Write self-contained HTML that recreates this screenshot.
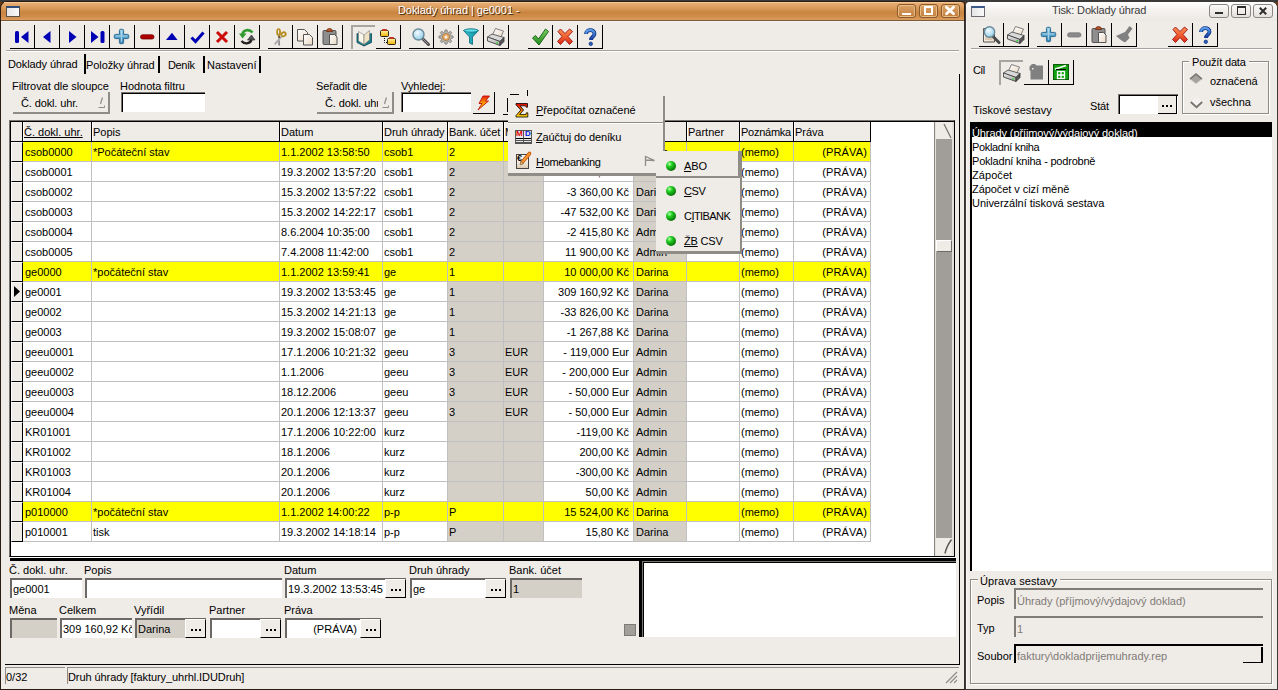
<!DOCTYPE html><html lang="cs"><head><meta charset="utf-8"><title>Doklady úhrad</title><style>
html,body{margin:0;padding:0;}
body{width:1278px;height:690px;overflow:hidden;background:#6a3a10;position:relative;
 font-family:"Liberation Sans",sans-serif;font-size:11px;color:#000;}
div{position:absolute;box-sizing:border-box;}
svg{position:absolute;overflow:visible;}
.t{white-space:nowrap;line-height:13px;height:13px;}
.g{color:#7f7b77;}
.btn{border-right:1px solid #000;border-bottom:1px solid #000;background:#efebe7;}
.sunk{border-top:1px solid #77736f;border-left:1px solid #77736f;background:#fff;box-shadow:inset 1px 1px 0 #000;}
.sunkg{border-top:2px solid #6e6b68;border-left:2px solid #6e6b68;background:#fff;}
u{text-decoration:underline;}
</style></head><body>
<div style="left:0px;top:0px;width:1278px;height:2px;background:#3a3a3a;"></div>
<div style="left:0px;top:689px;width:1278px;height:1px;background:#2a2a2a;"></div>
<div style="left:0px;top:1px;width:965px;height:689px;background:#2b1d12;border-radius:7px 4px 0 0;"></div>
<div style="left:1px;top:2px;width:963px;height:19px;background:linear-gradient(#e9b077 0%,#dea062 25%,#c98540 55%,#cf8c49 75%,#dfa061 100%);border-radius:6px 3px 0 0;"></div>
<div style="left:1px;top:20px;width:963px;height:1px;background:#7a5a3a;"></div>
<div style="left:4px;top:2px;width:957px;height:1px;background:#f5c592;"></div>
<div style="left:1px;top:21px;width:963px;height:668px;background:#efebe7;"></div>
<div style="left:1px;top:21px;width:963px;height:1px;background:#f6f4f2;"></div>
<div style="left:964px;top:21px;width:2px;height:668px;background:#35302c;"></div>
<div style="left:6px;top:6px;width:14px;height:11px;background:linear-gradient(90deg,#e4e4e4,#fafafa);border:1px solid #5c5145;border-top:2px solid #2f4f7a;"></div>
<div class="t" style="left:398px;top:4px;letter-spacing:-0.076px;color:#fff;text-shadow:1px 1px 0 #4a2c10;">Doklady úhrad | ge0001 -</div>
<div style="left:897px;top:4px;width:19px;height:14px;border:1px solid #8c5a2b;border-radius:3px;background:linear-gradient(#dca569,#c27c3b);box-shadow:inset 0 0 0 1px #e9bb85;"></div>
<div style="left:902px;top:13px;width:9px;height:2px;background:#fff;"></div>
<div style="left:919px;top:4px;width:19px;height:14px;border:1px solid #8c5a2b;border-radius:3px;background:linear-gradient(#dca569,#c27c3b);box-shadow:inset 0 0 0 1px #e9bb85;"></div>
<div style="left:924px;top:6px;width:9px;height:9px;border:2px solid #fff;border-bottom-width:2px;height:9px;"></div>
<div style="left:941px;top:4px;width:19px;height:14px;border:1px solid #8c5a2b;border-radius:3px;background:linear-gradient(#dca569,#c27c3b);box-shadow:inset 0 0 0 1px #e9bb85;"></div>
<svg style="left:945px;top:6px" width="10" height="9" viewBox="0 0 10 9"><path d="M1.500 1.200L8.500 7.800M8.500 1.200L1.500 7.800" stroke="#fff" stroke-width="2.800" stroke-linecap="round" fill="none"/></svg>
<svg width="0" height="0" style="left:0;top:0"><defs>
<linearGradient id="gPlus" x1="0" y1="0" x2="0" y2="1"><stop offset="0" stop-color="#9fd0e8"/><stop offset="0.5" stop-color="#5aa4cc"/><stop offset="1" stop-color="#3a82b0"/></linearGradient>
<linearGradient id="gRed" x1="0" y1="0" x2="0" y2="1"><stop offset="0" stop-color="#f89058"/><stop offset="0.5" stop-color="#f06030"/><stop offset="1" stop-color="#d82818"/></linearGradient>
<linearGradient id="gGreen" x1="0" y1="0" x2="0" y2="1"><stop offset="0" stop-color="#7fd060"/><stop offset="1" stop-color="#1f8a1f"/></linearGradient>
<linearGradient id="gPaper" x1="0" y1="0" x2="1" y2="1"><stop offset="0" stop-color="#ffffff"/><stop offset="1" stop-color="#e9d8c4"/></linearGradient>
<linearGradient id="gTeal" x1="0" y1="0" x2="1" y2="0"><stop offset="0" stop-color="#37c6d6"/><stop offset="1" stop-color="#0f8a9c"/></linearGradient>
<linearGradient id="gYel" x1="0" y1="0" x2="0" y2="1"><stop offset="0" stop-color="#fff2a0"/><stop offset="1" stop-color="#f0b000"/></linearGradient>
<radialGradient id="gLens" cx="0.4" cy="0.35" r="0.7"><stop offset="0" stop-color="#f2fbff"/><stop offset="1" stop-color="#8fcbe6"/></radialGradient>
<radialGradient id="gDot" cx="0.35" cy="0.3" r="0.75"><stop offset="0" stop-color="#b8ffb0"/><stop offset="0.35" stop-color="#22d022"/><stop offset="1" stop-color="#056a05"/></radialGradient>
<linearGradient id="gBlueQ" x1="0" y1="0" x2="0" y2="1"><stop offset="0" stop-color="#5aa0e8"/><stop offset="1" stop-color="#1038a0"/></linearGradient>
<linearGradient id="gPrn" x1="0" y1="0" x2="0" y2="1"><stop offset="0" stop-color="#f4f4f4"/><stop offset="1" stop-color="#9c9c9c"/></linearGradient>
</defs></svg>
<div class="btn" style="left:10px;top:25px;width:25px;height:24px;"></div>
<svg style="left:10px;top:25px" width="24" height="23" viewBox="0 0 24 23"><rect x="5" y="6" width="4" height="12" rx="1.5" fill="#0000b4"/><path d="M11 12L18.5 6V18Z" fill="#0000b4"/></svg>
<div class="btn" style="left:35px;top:25px;width:25px;height:24px;"></div>
<svg style="left:35px;top:25px" width="24" height="23" viewBox="0 0 24 23"><path d="M8 12L15.5 6V18Z" fill="#0000b4"/></svg>
<div class="btn" style="left:60px;top:25px;width:25px;height:24px;"></div>
<svg style="left:60px;top:25px" width="24" height="23" viewBox="0 0 24 23"><path d="M16.5 12L9 6V18Z" fill="#0000b4"/></svg>
<div class="btn" style="left:85px;top:25px;width:25px;height:24px;"></div>
<svg style="left:85px;top:25px" width="24" height="23" viewBox="0 0 24 23"><path d="M13.5 12L6 6V18Z" fill="#0000b4"/><rect x="15.5" y="6" width="4" height="12" rx="1.5" fill="#0000b4"/></svg>
<div class="btn" style="left:110px;top:25px;width:25px;height:24px;"></div>
<svg style="left:110px;top:25px" width="24" height="23" viewBox="0 0 24 23"><path d="M9.4 5.5a1.2 1.2 0 0 1 1.2 -1.2h1.8000000000000003a1.2 1.2 0 0 1 1.2 1.2V9.4H17.5a1.2 1.2 0 0 1 1.2 1.2v1.8000000000000003a1.2 1.2 0 0 1 -1.2 1.2H13.6V17.5a1.2 1.2 0 0 1 -1.2 1.2h-1.8000000000000003a1.2 1.2 0 0 1 -1.2 -1.2V13.6H5.5a1.2 1.2 0 0 1 -1.2 -1.2v-1.8000000000000003a1.2 1.2 0 0 1 1.2 -1.2H9.4Z" fill="url(#gPlus)" stroke="#2a6a92" stroke-width="1"/><path d="M11.5 5.8V16.7M5.8 11.0H17.2" stroke="#c4e6f4" stroke-width="1.200" opacity="0.700" fill="none"/></svg>
<div class="btn" style="left:135px;top:25px;width:25px;height:24px;"></div>
<svg style="left:135px;top:25px" width="24" height="23" viewBox="0 0 24 23"><rect x="5.5" y="9.8" width="13.5" height="4.2" rx="2" fill="#b00000" stroke="#700000" stroke-width="0.8"/></svg>
<div class="btn" style="left:160px;top:25px;width:25px;height:24px;"></div>
<svg style="left:160px;top:25px" width="24" height="23" viewBox="0 0 24 23"><path d="M12 7.800L6 15H17.500Z" fill="#0000b4"/></svg>
<div class="btn" style="left:185px;top:25px;width:25px;height:24px;"></div>
<svg style="left:185px;top:25px" width="24" height="23" viewBox="0 0 24 23"><path d="M6.5 12.5L10.5 16.5L18.5 7.5" stroke="#0000b4" stroke-width="3" fill="none" stroke-linejoin="miter"/></svg>
<div class="btn" style="left:210px;top:25px;width:25px;height:24px;"></div>
<svg style="left:210px;top:25px" width="24" height="23" viewBox="0 0 24 23"><path d="M7 7L17 17M17 7L7 17" stroke="#cc0a0a" stroke-width="3" fill="none"/></svg>
<div class="btn" style="left:235px;top:25px;width:25px;height:24px;"></div>
<svg style="left:235px;top:25px" width="24" height="23" viewBox="0 0 24 23"><path d="M17.5 7.5C14 3.5 8 5 7.5 9.5" stroke="#2e9a2e" stroke-width="2.6" fill="none"/><path d="M4 8.5L11.5 8.5L7.5 13.5Z" fill="#2e9a2e"/><path d="M6.5 16C10 20 16 18.5 16.5 14" stroke="#222" stroke-width="2.4" fill="none"/><path d="M12.5 15L20 15L16.5 10Z" fill="#555" stroke="#222" stroke-width="0.6"/></svg>
<div class="btn" style="left:268px;top:25px;width:25px;height:24px;"></div>
<svg style="left:268px;top:25px" width="24" height="23" viewBox="0 0 24 23"><path d="M10.800 9.500L11.200 20.500" stroke="#8c8c8c" stroke-width="1.800"/><path d="M14 11L6.500 19.500" stroke="#c4c4c4" stroke-width="2"/><path d="M13.500 11.500L7 19" stroke="#777" stroke-width="0.600"/><ellipse cx="10.600" cy="7" rx="1.500" ry="3" stroke="#b48a18" stroke-width="1.700" fill="none"/><ellipse cx="15.500" cy="9.300" rx="2.300" ry="1.900" stroke="#b48a18" stroke-width="1.700" fill="none" transform="rotate(-35 15.500 9.300)"/><circle cx="11.300" cy="12" r="0.900" fill="#6a5010"/></svg>
<div class="btn" style="left:293px;top:25px;width:25px;height:24px;"></div>
<svg style="left:293px;top:25px" width="24" height="23" viewBox="0 0 24 23"><path d="M4.5 4.5h7l3 3v8.5h-10z" fill="url(#gPaper)" stroke="#555" stroke-width="1"/><path d="M10.500 9.500h6l3 3v7.500h-9z" fill="url(#gPaper)" stroke="#555" stroke-width="1"/></svg>
<div class="btn" style="left:318px;top:25px;width:25px;height:24px;"></div>
<svg style="left:318px;top:25px" width="24" height="23" viewBox="0 0 24 23"><rect x="5" y="5.500" width="13" height="14" rx="1" fill="#8e8e8e" stroke="#555" stroke-width="1"/><path d="M8.5 6.500a3 3 0 0 1 6 0z" fill="#b5562a" stroke="#6a2a10" stroke-width="0.8"/><path d="M11.500 9.500h5l2.500 2.500v7.500h-7.500z" fill="url(#gPaper)" stroke="#555" stroke-width="1"/></svg>
<div class="btn" style="left:376px;top:25px;width:25px;height:24px;"></div>
<svg style="left:376px;top:25px" width="24" height="23" viewBox="0 0 24 23"><path d="M8.500 11v6.500h3" stroke="#000" stroke-width="1" stroke-dasharray="1 1" fill="none"/><rect x="4.500" y="5.500" width="8" height="6" rx="1" fill="url(#gYel)" stroke="#1a1200" stroke-width="0.9"/><rect x="6" y="4" width="5" height="2" rx="1" fill="#c03020"/><rect x="11.500" y="13.500" width="8" height="6" rx="1" fill="url(#gYel)" stroke="#1a1200" stroke-width="0.9"/><rect x="13" y="12" width="5" height="2" rx="1" fill="#c03020"/></svg>
<div class="btn" style="left:409px;top:25px;width:25px;height:24px;"></div>
<svg style="left:409px;top:25px" width="24" height="23" viewBox="0 0 24 23"><path d="M13.500 13.500L19.500 19.500" stroke="#4a4a4a" stroke-width="3" stroke-linecap="round"/><path d="M13.5 13.500L19 19" stroke="#9a9a9a" stroke-width="1" stroke-linecap="round"/><circle cx="9.500" cy="9.500" r="5.500" fill="url(#gLens)" stroke="#6a8a9a" stroke-width="1.4"/></svg>
<div class="btn" style="left:434px;top:25px;width:25px;height:24px;"></div>
<svg style="left:434px;top:25px" width="24" height="23" viewBox="0 0 24 23"><path d="M19.1 11.1L19.1 12.9L17.0 13.4L16.5 14.6L17.7 16.4L16.4 17.7L14.6 16.5L13.4 17.0L12.9 19.1L11.1 19.1L10.6 17.0L9.4 16.5L7.6 17.7L6.3 16.4L7.5 14.6L7.0 13.4L4.9 12.9L4.9 11.1L7.0 10.6L7.5 9.4L6.3 7.6L7.6 6.3L9.4 7.5L10.6 7.0L11.1 4.9L12.9 4.9L13.4 7.0L14.6 7.5L16.4 6.3L17.7 7.6L16.5 9.4L17.0 10.6Z" fill="#b9b4aa" stroke="#777" stroke-width="0.8"/><circle cx="12" cy="12" r="3.6" fill="#e8a860" stroke="#8a6a40" stroke-width="0.6"/><circle cx="12" cy="12" r="1.500" fill="#f6f0e6"/></svg>
<div class="btn" style="left:459px;top:25px;width:25px;height:24px;"></div>
<svg style="left:459px;top:25px" width="24" height="23" viewBox="0 0 24 23"><path d="M4.500 5.500C8 3.500 16 3.500 19.500 5.500L13.500 12V19.500L10.500 18V12Z" fill="url(#gTeal)" stroke="#0a6a78" stroke-width="0.8"/><ellipse cx="12" cy="5.500" rx="7" ry="1.600" fill="#5fe0ea" stroke="#0a6a78" stroke-width="0.6"/></svg>
<div class="btn" style="left:484px;top:25px;width:25px;height:24px;"></div>
<svg style="left:484px;top:25px" width="24" height="23" viewBox="0 0 24 23"><path d="M8 11L11.500 3.500L19.500 6L16.500 13Z" fill="url(#gPaper)" stroke="#666" stroke-width="0.8"/><path d="M3.500 12L8 9L20 12.500L16 16.500Z" fill="#d9d9d9" stroke="#444" stroke-width="0.8"/><path d="M3.500 12L16 16.500V20.500L3.500 16Z" fill="url(#gPrn)" stroke="#333" stroke-width="0.8"/><path d="M16 16.500L20 12.500V16.500L16 20.500Z" fill="#555" stroke="#333" stroke-width="0.8"/><rect x="12.500" y="17" width="1.500" height="1.500" fill="#20e020"/></svg>
<div class="btn" style="left:528px;top:25px;width:25px;height:24px;"></div>
<svg style="left:528px;top:25px" width="24" height="23" viewBox="0 0 24 23"><path d="M4.500 13L7.500 10.500L10.500 14L17.500 4L20.500 6.500L11 20Z" fill="url(#gGreen)" stroke="#0f5a0f" stroke-width="0.9"/></svg>
<div class="btn" style="left:553px;top:25px;width:25px;height:24px;"></div>
<svg style="left:553px;top:25px" width="24" height="23" viewBox="0 0 24 23"><path d="M5 6.500L7.500 4L12 8.500L16.500 4L19.500 6.500L15 11.500L19.500 16.500L16.500 19.500L12 14.500L7.500 19.500L4.500 16.500L9 11.500Z" fill="url(#gRed)" stroke="#a01010" stroke-width="0.9" stroke-linejoin="round"/></svg>
<div class="btn" style="left:578px;top:25px;width:25px;height:24px;"></div>
<svg style="left:578px;top:25px" width="24" height="23" viewBox="0 0 24 23"><path d="M8 9C8 4 16.500 4 16.500 8.800C16.500 11.500 13 12 13 15" stroke="#0c2c80" stroke-width="3.800" fill="none"/><path d="M8 9C8 4 16.500 4 16.500 8.800C16.500 11.500 13 12 13 15" stroke="url(#gBlueQ)" stroke-width="2.300" fill="none"/><circle cx="12.800" cy="18.800" r="1.700" fill="#2a60c0" stroke="#0c2c80" stroke-width="0.800"/></svg>
<div style="left:351px;top:25px;width:24px;height:24px;border-top:2px solid #a8a4a0;border-left:2px solid #a8a4a0;background:#efebe7;"></div>
<svg style="left:352px;top:26px" width="24" height="23" viewBox="0 0 24 23"><path d="M5 7.500L12 10.500V20L5 16.500Z" fill="#1a7a86" stroke="#0c4a52" stroke-width="0.8"/><path d="M19.500 7.500L12 10.500V20L19.500 16.500Z" fill="#1a7a86" stroke="#0c4a52" stroke-width="0.8"/><path d="M6.500 5.500L12 9V18.500L6.500 15Z" fill="#fbf6ea" stroke="#777" stroke-width="0.6"/><path d="M17.500 4.500L12 9V18.500L17.500 14Z" fill="#efe2c4" stroke="#777" stroke-width="0.6"/></svg>
<div style="left:6px;top:50px;width:953px;height:1px;background:#a5a19d;"></div>
<div style="left:6px;top:51px;width:953px;height:1px;background:#fff;"></div>
<div class="t" style="left:8px;top:58px;letter-spacing:-0.111px;">Doklady úhrad</div>
<div class="t" style="left:86px;top:59px;letter-spacing:-0.086px;">Položky úhrad</div>
<div class="t" style="left:168px;top:59px;letter-spacing:-0.43px;">Deník</div>
<div class="t" style="left:207px;top:59px;letter-spacing:-0.003px;">Nastavení</div>
<div style="left:84px;top:54px;width:2px;height:20px;background:#000;"></div>
<div style="left:158px;top:56px;width:2px;height:17px;background:#000;"></div>
<div style="left:203px;top:56px;width:2px;height:17px;background:#000;"></div>
<div style="left:259px;top:56px;width:2px;height:17px;background:#000;"></div>
<div class="t" style="left:12px;top:80px;letter-spacing:-0.049px;">Filtrovat dle sloupce</div>
<div class="t" style="left:120px;top:80px;letter-spacing:-0.038px;">Hodnota filtru</div>
<div class="t" style="left:316px;top:80px;letter-spacing:-0.136px;">Seřadit dle</div>
<div class="t" style="left:401px;top:80px;letter-spacing:-0.038px;">Vyhledej:</div>
<div style="left:13px;top:92px;width:97px;height:22px;border-right:2px solid #8f8b87;border-bottom:2px solid #8f8b87;background:#efebe7;overflow:hidden;"></div>
<div class="t" style="left:21px;top:97px;letter-spacing:-0.131px;">Č. dokl. uhr.</div>
<div style="left:94px;top:92px;width:14px;height:20px;background:#efebe7;"></div>
<svg style="left:94px;top:96px" width="12" height="14" viewBox="0 0 12 14"><path d="M8.500 1.500L6.500 8" stroke="#8f8b87" stroke-width="1.200" fill="none"/><path d="M4.500 11.500H10.500V9.500" stroke="#8f8b87" stroke-width="1" fill="none"/></svg>
<div style="left:317px;top:92px;width:77px;height:22px;border-right:2px solid #8f8b87;border-bottom:2px solid #8f8b87;background:#efebe7;overflow:hidden;"></div>
<div class="t" style="left:325px;top:97px;letter-spacing:-0.131px;">Č. dokl. uhr.</div>
<div style="left:378px;top:92px;width:14px;height:20px;background:#efebe7;"></div>
<svg style="left:378px;top:96px" width="12" height="14" viewBox="0 0 12 14"><path d="M8.500 1.500L6.500 8" stroke="#8f8b87" stroke-width="1.200" fill="none"/><path d="M4.500 11.500H10.500V9.500" stroke="#8f8b87" stroke-width="1" fill="none"/></svg>
<div class="sunk" style="left:121px;top:92px;width:84px;height:20px;"></div>
<div class="sunk" style="left:401px;top:92px;width:70px;height:20px;"></div>
<div class="btn" style="left:473px;top:92px;width:22px;height:22px;"></div>
<svg style="left:474px;top:93px" width="20" height="20" viewBox="0 0 20 20"><defs><linearGradient id="gBolt" x1="0" y1="0" x2="0" y2="1"><stop offset="0" stop-color="#e82000"/><stop offset="0.45" stop-color="#f89000"/><stop offset="1" stop-color="#fff000"/></linearGradient></defs><path d="M9 3L15.500 3L11.500 8L14.500 8L4 17L8 10.500L5 10.500Z" fill="url(#gBolt)" stroke="#c01010" stroke-width="0.900" stroke-linejoin="round"/></svg>
<div style="left:503px;top:90px;width:25px;height:25px;border-right:1px solid #000;border-bottom:1px solid #000;"></div>
<div style="left:507px;top:98px;width:1px;height:14px;background:#000;"></div>
<div style="left:510px;top:94px;width:9px;height:1px;background:#000;"></div>
<div style="left:959px;top:74px;width:1px;height:591px;background:#000;"></div>
<div style="left:9px;top:120px;width:946px;height:437px;background:#fff;border-left:1px solid #77736f;border-top:1px solid #77736f;border-right:1px solid #000;border-bottom:1px solid #000;box-shadow:inset 1px 1px 0 #000;"></div>
<div style="left:10px;top:557px;width:946px;height:1px;background:#fff;"></div>
<div style="left:10px;top:558px;width:946px;height:3px;background:#000;"></div>
<div style="left:11px;top:122px;width:860px;height:19px;background:#efebe7;"></div>
<div style="left:11px;top:141px;width:860px;height:1px;background:#000;"></div>
<div style="left:22px;top:122px;width:1px;height:20px;background:#000;"></div>
<div style="left:23px;top:122px;width:1px;height:19px;background:#fff;"></div>
<div style="left:91px;top:122px;width:1px;height:20px;background:#000;"></div>
<div style="left:92px;top:122px;width:1px;height:19px;background:#fff;"></div>
<div style="left:279px;top:122px;width:1px;height:20px;background:#000;"></div>
<div style="left:280px;top:122px;width:1px;height:19px;background:#fff;"></div>
<div style="left:382px;top:122px;width:1px;height:20px;background:#000;"></div>
<div style="left:383px;top:122px;width:1px;height:19px;background:#fff;"></div>
<div style="left:447px;top:122px;width:1px;height:20px;background:#000;"></div>
<div style="left:448px;top:122px;width:1px;height:19px;background:#fff;"></div>
<div style="left:503px;top:122px;width:1px;height:20px;background:#000;"></div>
<div style="left:504px;top:122px;width:1px;height:19px;background:#fff;"></div>
<div style="left:543px;top:122px;width:1px;height:20px;background:#000;"></div>
<div style="left:544px;top:122px;width:1px;height:19px;background:#fff;"></div>
<div style="left:633px;top:122px;width:1px;height:20px;background:#000;"></div>
<div style="left:634px;top:122px;width:1px;height:19px;background:#fff;"></div>
<div style="left:686px;top:122px;width:1px;height:20px;background:#000;"></div>
<div style="left:687px;top:122px;width:1px;height:19px;background:#fff;"></div>
<div style="left:739px;top:122px;width:1px;height:20px;background:#000;"></div>
<div style="left:740px;top:122px;width:1px;height:19px;background:#fff;"></div>
<div style="left:793px;top:122px;width:1px;height:20px;background:#000;"></div>
<div style="left:794px;top:122px;width:1px;height:19px;background:#fff;"></div>
<div style="left:870px;top:122px;width:1px;height:20px;background:#000;"></div>
<div style="left:23px;top:122px;width:68px;height:19px;overflow:hidden;"><div class="t" style="left:1px;top:4px"><u>Č. dokl. uhr.</u></div></div>
<div style="left:92px;top:122px;width:187px;height:19px;overflow:hidden;"><div class="t" style="left:1px;top:4px">Popis</div></div>
<div style="left:280px;top:122px;width:102px;height:19px;overflow:hidden;"><div class="t" style="left:1px;top:4px">Datum</div></div>
<div style="left:383px;top:122px;width:64px;height:19px;overflow:hidden;"><div class="t" style="left:1px;top:4px">Druh úhrady</div></div>
<div style="left:448px;top:122px;width:55px;height:19px;overflow:hidden;"><div class="t" style="left:1px;top:4px;letter-spacing:-0.068px">Bank. účet</div></div>
<div style="left:504px;top:122px;width:39px;height:19px;overflow:hidden;"><div class="t" style="left:1px;top:4px">Měna</div></div>
<div style="left:544px;top:122px;width:89px;height:19px;overflow:hidden;"><div class="t" style="left:1px;top:4px">Celkem</div></div>
<div style="left:634px;top:122px;width:52px;height:19px;overflow:hidden;"><div class="t" style="left:1px;top:4px;letter-spacing:-0.165px">Vyřídil</div></div>
<div style="left:687px;top:122px;width:52px;height:19px;overflow:hidden;"><div class="t" style="left:1px;top:4px">Partner</div></div>
<div style="left:740px;top:122px;width:53px;height:19px;overflow:hidden;"><div class="t" style="left:1px;top:4px;letter-spacing:-0.248px">Poznámka</div></div>
<div style="left:794px;top:122px;width:76px;height:19px;overflow:hidden;"><div class="t" style="left:1px;top:4px">Práva</div></div>
<div style="left:11px;top:142px;width:12px;height:20px;background:#efebe7;border-right:1px solid #000;border-bottom:1px solid #000;border-left:1px solid #fff;border-top:1px solid #fff;"></div>
<div style="left:23px;top:142px;width:847px;height:19px;background:#ffff00;"></div>
<div style="left:23px;top:161px;width:848px;height:1px;background:#c0c0c0;"></div>
<div style="left:23px;top:142px;width:68px;height:19px;overflow:hidden;"><div class="t" style="left:2px;top:4px">csob0000</div></div>
<div style="left:92px;top:142px;width:187px;height:19px;overflow:hidden;"><div class="t" style="left:1px;top:4px">*Počáteční stav</div></div>
<div style="left:280px;top:142px;width:102px;height:19px;overflow:hidden;"><div class="t" style="left:1px;top:4px">1.1.2002 13:58:50</div></div>
<div style="left:383px;top:142px;width:64px;height:19px;overflow:hidden;"><div class="t" style="left:1px;top:4px">csob1</div></div>
<div style="left:448px;top:142px;width:55px;height:19px;overflow:hidden;"><div class="t" style="left:1px;top:4px">2</div></div>
<div style="left:544px;top:142px;width:89px;height:19px;overflow:hidden;"><div class="t" style="right:4px;top:4px">0,00 Kč</div></div>
<div style="left:634px;top:142px;width:52px;height:19px;overflow:hidden;"><div class="t" style="left:2px;top:4px">Darina</div></div>
<div style="left:740px;top:142px;width:53px;height:19px;overflow:hidden;"><div class="t" style="left:1px;top:4px">(memo)</div></div>
<div style="left:794px;top:142px;width:76px;height:19px;overflow:hidden;"><div class="t" style="right:3px;top:4px;letter-spacing:0.15px">(PRÁVA)</div></div>
<div style="left:11px;top:162px;width:12px;height:20px;background:#efebe7;border-right:1px solid #000;border-bottom:1px solid #000;border-left:1px solid #fff;border-top:1px solid #fff;"></div>
<div style="left:448px;top:162px;width:55px;height:19px;background:#d4d0c8;"></div>
<div style="left:504px;top:162px;width:39px;height:19px;background:#d4d0c8;"></div>
<div style="left:634px;top:162px;width:52px;height:19px;background:#d4d0c8;"></div>
<div style="left:23px;top:181px;width:848px;height:1px;background:#c0c0c0;"></div>
<div style="left:23px;top:162px;width:68px;height:19px;overflow:hidden;"><div class="t" style="left:2px;top:4px">csob0001</div></div>
<div style="left:280px;top:162px;width:102px;height:19px;overflow:hidden;"><div class="t" style="left:1px;top:4px">19.3.2002 13:57:20</div></div>
<div style="left:383px;top:162px;width:64px;height:19px;overflow:hidden;"><div class="t" style="left:1px;top:4px">csob1</div></div>
<div style="left:448px;top:162px;width:55px;height:19px;overflow:hidden;"><div class="t" style="left:1px;top:4px">2</div></div>
<div style="left:544px;top:162px;width:89px;height:19px;overflow:hidden;"><div class="t" style="right:4px;top:4px">1 000,00 Kč</div></div>
<div style="left:634px;top:162px;width:52px;height:19px;overflow:hidden;"><div class="t" style="left:2px;top:4px">Darina</div></div>
<div style="left:740px;top:162px;width:53px;height:19px;overflow:hidden;"><div class="t" style="left:1px;top:4px">(memo)</div></div>
<div style="left:794px;top:162px;width:76px;height:19px;overflow:hidden;"><div class="t" style="right:3px;top:4px;letter-spacing:0.15px">(PRÁVA)</div></div>
<div style="left:11px;top:182px;width:12px;height:20px;background:#efebe7;border-right:1px solid #000;border-bottom:1px solid #000;border-left:1px solid #fff;border-top:1px solid #fff;"></div>
<div style="left:448px;top:182px;width:55px;height:19px;background:#d4d0c8;"></div>
<div style="left:504px;top:182px;width:39px;height:19px;background:#d4d0c8;"></div>
<div style="left:634px;top:182px;width:52px;height:19px;background:#d4d0c8;"></div>
<div style="left:23px;top:201px;width:848px;height:1px;background:#c0c0c0;"></div>
<div style="left:23px;top:182px;width:68px;height:19px;overflow:hidden;"><div class="t" style="left:2px;top:4px">csob0002</div></div>
<div style="left:280px;top:182px;width:102px;height:19px;overflow:hidden;"><div class="t" style="left:1px;top:4px">15.3.2002 13:57:22</div></div>
<div style="left:383px;top:182px;width:64px;height:19px;overflow:hidden;"><div class="t" style="left:1px;top:4px">csob1</div></div>
<div style="left:448px;top:182px;width:55px;height:19px;overflow:hidden;"><div class="t" style="left:1px;top:4px">2</div></div>
<div style="left:544px;top:182px;width:89px;height:19px;overflow:hidden;"><div class="t" style="right:4px;top:4px">-3 360,00 Kč</div></div>
<div style="left:634px;top:182px;width:52px;height:19px;overflow:hidden;"><div class="t" style="left:2px;top:4px">Darina</div></div>
<div style="left:740px;top:182px;width:53px;height:19px;overflow:hidden;"><div class="t" style="left:1px;top:4px">(memo)</div></div>
<div style="left:794px;top:182px;width:76px;height:19px;overflow:hidden;"><div class="t" style="right:3px;top:4px;letter-spacing:0.15px">(PRÁVA)</div></div>
<div style="left:11px;top:202px;width:12px;height:20px;background:#efebe7;border-right:1px solid #000;border-bottom:1px solid #000;border-left:1px solid #fff;border-top:1px solid #fff;"></div>
<div style="left:448px;top:202px;width:55px;height:19px;background:#d4d0c8;"></div>
<div style="left:504px;top:202px;width:39px;height:19px;background:#d4d0c8;"></div>
<div style="left:634px;top:202px;width:52px;height:19px;background:#d4d0c8;"></div>
<div style="left:23px;top:221px;width:848px;height:1px;background:#c0c0c0;"></div>
<div style="left:23px;top:202px;width:68px;height:19px;overflow:hidden;"><div class="t" style="left:2px;top:4px">csob0003</div></div>
<div style="left:280px;top:202px;width:102px;height:19px;overflow:hidden;"><div class="t" style="left:1px;top:4px">15.3.2002 14:22:17</div></div>
<div style="left:383px;top:202px;width:64px;height:19px;overflow:hidden;"><div class="t" style="left:1px;top:4px">csob1</div></div>
<div style="left:448px;top:202px;width:55px;height:19px;overflow:hidden;"><div class="t" style="left:1px;top:4px">2</div></div>
<div style="left:544px;top:202px;width:89px;height:19px;overflow:hidden;"><div class="t" style="right:4px;top:4px">-47 532,00 Kč</div></div>
<div style="left:634px;top:202px;width:52px;height:19px;overflow:hidden;"><div class="t" style="left:2px;top:4px">Darina</div></div>
<div style="left:740px;top:202px;width:53px;height:19px;overflow:hidden;"><div class="t" style="left:1px;top:4px">(memo)</div></div>
<div style="left:794px;top:202px;width:76px;height:19px;overflow:hidden;"><div class="t" style="right:3px;top:4px;letter-spacing:0.15px">(PRÁVA)</div></div>
<div style="left:11px;top:222px;width:12px;height:20px;background:#efebe7;border-right:1px solid #000;border-bottom:1px solid #000;border-left:1px solid #fff;border-top:1px solid #fff;"></div>
<div style="left:448px;top:222px;width:55px;height:19px;background:#d4d0c8;"></div>
<div style="left:504px;top:222px;width:39px;height:19px;background:#d4d0c8;"></div>
<div style="left:634px;top:222px;width:52px;height:19px;background:#d4d0c8;"></div>
<div style="left:23px;top:241px;width:848px;height:1px;background:#c0c0c0;"></div>
<div style="left:23px;top:222px;width:68px;height:19px;overflow:hidden;"><div class="t" style="left:2px;top:4px">csob0004</div></div>
<div style="left:280px;top:222px;width:102px;height:19px;overflow:hidden;"><div class="t" style="left:1px;top:4px">8.6.2004 10:35:00</div></div>
<div style="left:383px;top:222px;width:64px;height:19px;overflow:hidden;"><div class="t" style="left:1px;top:4px">csob1</div></div>
<div style="left:448px;top:222px;width:55px;height:19px;overflow:hidden;"><div class="t" style="left:1px;top:4px">2</div></div>
<div style="left:544px;top:222px;width:89px;height:19px;overflow:hidden;"><div class="t" style="right:4px;top:4px">-2 415,80 Kč</div></div>
<div style="left:634px;top:222px;width:52px;height:19px;overflow:hidden;"><div class="t" style="left:2px;top:4px">Admin</div></div>
<div style="left:740px;top:222px;width:53px;height:19px;overflow:hidden;"><div class="t" style="left:1px;top:4px">(memo)</div></div>
<div style="left:794px;top:222px;width:76px;height:19px;overflow:hidden;"><div class="t" style="right:3px;top:4px;letter-spacing:0.15px">(PRÁVA)</div></div>
<div style="left:11px;top:242px;width:12px;height:20px;background:#efebe7;border-right:1px solid #000;border-bottom:1px solid #000;border-left:1px solid #fff;border-top:1px solid #fff;"></div>
<div style="left:448px;top:242px;width:55px;height:19px;background:#d4d0c8;"></div>
<div style="left:504px;top:242px;width:39px;height:19px;background:#d4d0c8;"></div>
<div style="left:634px;top:242px;width:52px;height:19px;background:#d4d0c8;"></div>
<div style="left:23px;top:261px;width:848px;height:1px;background:#c0c0c0;"></div>
<div style="left:23px;top:242px;width:68px;height:19px;overflow:hidden;"><div class="t" style="left:2px;top:4px">csob0005</div></div>
<div style="left:280px;top:242px;width:102px;height:19px;overflow:hidden;"><div class="t" style="left:1px;top:4px">7.4.2008 11:42:00</div></div>
<div style="left:383px;top:242px;width:64px;height:19px;overflow:hidden;"><div class="t" style="left:1px;top:4px">csob1</div></div>
<div style="left:448px;top:242px;width:55px;height:19px;overflow:hidden;"><div class="t" style="left:1px;top:4px">2</div></div>
<div style="left:544px;top:242px;width:89px;height:19px;overflow:hidden;"><div class="t" style="right:4px;top:4px">11 900,00 Kč</div></div>
<div style="left:634px;top:242px;width:52px;height:19px;overflow:hidden;"><div class="t" style="left:2px;top:4px">Admin</div></div>
<div style="left:740px;top:242px;width:53px;height:19px;overflow:hidden;"><div class="t" style="left:1px;top:4px">(memo)</div></div>
<div style="left:794px;top:242px;width:76px;height:19px;overflow:hidden;"><div class="t" style="right:3px;top:4px;letter-spacing:0.15px">(PRÁVA)</div></div>
<div style="left:11px;top:262px;width:12px;height:20px;background:#efebe7;border-right:1px solid #000;border-bottom:1px solid #000;border-left:1px solid #fff;border-top:1px solid #fff;"></div>
<div style="left:23px;top:262px;width:847px;height:19px;background:#ffff00;"></div>
<div style="left:23px;top:281px;width:848px;height:1px;background:#c0c0c0;"></div>
<div style="left:23px;top:262px;width:68px;height:19px;overflow:hidden;"><div class="t" style="left:2px;top:4px">ge0000</div></div>
<div style="left:92px;top:262px;width:187px;height:19px;overflow:hidden;"><div class="t" style="left:1px;top:4px">*počáteční stav</div></div>
<div style="left:280px;top:262px;width:102px;height:19px;overflow:hidden;"><div class="t" style="left:1px;top:4px">1.1.2002 13:59:41</div></div>
<div style="left:383px;top:262px;width:64px;height:19px;overflow:hidden;"><div class="t" style="left:1px;top:4px">ge</div></div>
<div style="left:448px;top:262px;width:55px;height:19px;overflow:hidden;"><div class="t" style="left:1px;top:4px">1</div></div>
<div style="left:544px;top:262px;width:89px;height:19px;overflow:hidden;"><div class="t" style="right:4px;top:4px">10 000,00 Kč</div></div>
<div style="left:634px;top:262px;width:52px;height:19px;overflow:hidden;"><div class="t" style="left:2px;top:4px">Darina</div></div>
<div style="left:740px;top:262px;width:53px;height:19px;overflow:hidden;"><div class="t" style="left:1px;top:4px">(memo)</div></div>
<div style="left:794px;top:262px;width:76px;height:19px;overflow:hidden;"><div class="t" style="right:3px;top:4px;letter-spacing:0.15px">(PRÁVA)</div></div>
<div style="left:11px;top:282px;width:12px;height:20px;background:#efebe7;border-right:1px solid #000;border-bottom:1px solid #000;border-left:1px solid #fff;border-top:1px solid #fff;"></div>
<div style="left:448px;top:282px;width:55px;height:19px;background:#d4d0c8;"></div>
<div style="left:504px;top:282px;width:39px;height:19px;background:#d4d0c8;"></div>
<div style="left:634px;top:282px;width:52px;height:19px;background:#d4d0c8;"></div>
<div style="left:23px;top:301px;width:848px;height:1px;background:#c0c0c0;"></div>
<div style="left:23px;top:282px;width:68px;height:19px;overflow:hidden;"><div class="t" style="left:2px;top:4px">ge0001</div></div>
<div style="left:280px;top:282px;width:102px;height:19px;overflow:hidden;"><div class="t" style="left:1px;top:4px">19.3.2002 13:53:45</div></div>
<div style="left:383px;top:282px;width:64px;height:19px;overflow:hidden;"><div class="t" style="left:1px;top:4px">ge</div></div>
<div style="left:448px;top:282px;width:55px;height:19px;overflow:hidden;"><div class="t" style="left:1px;top:4px">1</div></div>
<div style="left:544px;top:282px;width:89px;height:19px;overflow:hidden;"><div class="t" style="right:4px;top:4px">309 160,92 Kč</div></div>
<div style="left:634px;top:282px;width:52px;height:19px;overflow:hidden;"><div class="t" style="left:2px;top:4px">Darina</div></div>
<div style="left:740px;top:282px;width:53px;height:19px;overflow:hidden;"><div class="t" style="left:1px;top:4px">(memo)</div></div>
<div style="left:794px;top:282px;width:76px;height:19px;overflow:hidden;"><div class="t" style="right:3px;top:4px;letter-spacing:0.15px">(PRÁVA)</div></div>
<div style="left:11px;top:302px;width:12px;height:20px;background:#efebe7;border-right:1px solid #000;border-bottom:1px solid #000;border-left:1px solid #fff;border-top:1px solid #fff;"></div>
<div style="left:448px;top:302px;width:55px;height:19px;background:#d4d0c8;"></div>
<div style="left:504px;top:302px;width:39px;height:19px;background:#d4d0c8;"></div>
<div style="left:634px;top:302px;width:52px;height:19px;background:#d4d0c8;"></div>
<div style="left:23px;top:321px;width:848px;height:1px;background:#c0c0c0;"></div>
<div style="left:23px;top:302px;width:68px;height:19px;overflow:hidden;"><div class="t" style="left:2px;top:4px">ge0002</div></div>
<div style="left:280px;top:302px;width:102px;height:19px;overflow:hidden;"><div class="t" style="left:1px;top:4px">15.3.2002 14:21:13</div></div>
<div style="left:383px;top:302px;width:64px;height:19px;overflow:hidden;"><div class="t" style="left:1px;top:4px">ge</div></div>
<div style="left:448px;top:302px;width:55px;height:19px;overflow:hidden;"><div class="t" style="left:1px;top:4px">1</div></div>
<div style="left:544px;top:302px;width:89px;height:19px;overflow:hidden;"><div class="t" style="right:4px;top:4px">-33 826,00 Kč</div></div>
<div style="left:634px;top:302px;width:52px;height:19px;overflow:hidden;"><div class="t" style="left:2px;top:4px">Darina</div></div>
<div style="left:740px;top:302px;width:53px;height:19px;overflow:hidden;"><div class="t" style="left:1px;top:4px">(memo)</div></div>
<div style="left:794px;top:302px;width:76px;height:19px;overflow:hidden;"><div class="t" style="right:3px;top:4px;letter-spacing:0.15px">(PRÁVA)</div></div>
<div style="left:11px;top:322px;width:12px;height:20px;background:#efebe7;border-right:1px solid #000;border-bottom:1px solid #000;border-left:1px solid #fff;border-top:1px solid #fff;"></div>
<div style="left:448px;top:322px;width:55px;height:19px;background:#d4d0c8;"></div>
<div style="left:504px;top:322px;width:39px;height:19px;background:#d4d0c8;"></div>
<div style="left:634px;top:322px;width:52px;height:19px;background:#d4d0c8;"></div>
<div style="left:23px;top:341px;width:848px;height:1px;background:#c0c0c0;"></div>
<div style="left:23px;top:322px;width:68px;height:19px;overflow:hidden;"><div class="t" style="left:2px;top:4px">ge0003</div></div>
<div style="left:280px;top:322px;width:102px;height:19px;overflow:hidden;"><div class="t" style="left:1px;top:4px">19.3.2002 15:08:07</div></div>
<div style="left:383px;top:322px;width:64px;height:19px;overflow:hidden;"><div class="t" style="left:1px;top:4px">ge</div></div>
<div style="left:448px;top:322px;width:55px;height:19px;overflow:hidden;"><div class="t" style="left:1px;top:4px">1</div></div>
<div style="left:544px;top:322px;width:89px;height:19px;overflow:hidden;"><div class="t" style="right:4px;top:4px">-1 267,88 Kč</div></div>
<div style="left:634px;top:322px;width:52px;height:19px;overflow:hidden;"><div class="t" style="left:2px;top:4px">Darina</div></div>
<div style="left:740px;top:322px;width:53px;height:19px;overflow:hidden;"><div class="t" style="left:1px;top:4px">(memo)</div></div>
<div style="left:794px;top:322px;width:76px;height:19px;overflow:hidden;"><div class="t" style="right:3px;top:4px;letter-spacing:0.15px">(PRÁVA)</div></div>
<div style="left:11px;top:342px;width:12px;height:20px;background:#efebe7;border-right:1px solid #000;border-bottom:1px solid #000;border-left:1px solid #fff;border-top:1px solid #fff;"></div>
<div style="left:448px;top:342px;width:55px;height:19px;background:#d4d0c8;"></div>
<div style="left:504px;top:342px;width:39px;height:19px;background:#d4d0c8;"></div>
<div style="left:634px;top:342px;width:52px;height:19px;background:#d4d0c8;"></div>
<div style="left:23px;top:361px;width:848px;height:1px;background:#c0c0c0;"></div>
<div style="left:23px;top:342px;width:68px;height:19px;overflow:hidden;"><div class="t" style="left:2px;top:4px">geeu0001</div></div>
<div style="left:280px;top:342px;width:102px;height:19px;overflow:hidden;"><div class="t" style="left:1px;top:4px">17.1.2006 10:21:32</div></div>
<div style="left:383px;top:342px;width:64px;height:19px;overflow:hidden;"><div class="t" style="left:1px;top:4px">geeu</div></div>
<div style="left:448px;top:342px;width:55px;height:19px;overflow:hidden;"><div class="t" style="left:1px;top:4px">3</div></div>
<div style="left:504px;top:342px;width:39px;height:19px;overflow:hidden;"><div class="t" style="left:1px;top:4px">EUR</div></div>
<div style="left:544px;top:342px;width:89px;height:19px;overflow:hidden;"><div class="t" style="right:4px;top:4px">- 119,000 Eur</div></div>
<div style="left:634px;top:342px;width:52px;height:19px;overflow:hidden;"><div class="t" style="left:2px;top:4px">Admin</div></div>
<div style="left:740px;top:342px;width:53px;height:19px;overflow:hidden;"><div class="t" style="left:1px;top:4px">(memo)</div></div>
<div style="left:794px;top:342px;width:76px;height:19px;overflow:hidden;"><div class="t" style="right:3px;top:4px;letter-spacing:0.15px">(PRÁVA)</div></div>
<div style="left:11px;top:362px;width:12px;height:20px;background:#efebe7;border-right:1px solid #000;border-bottom:1px solid #000;border-left:1px solid #fff;border-top:1px solid #fff;"></div>
<div style="left:448px;top:362px;width:55px;height:19px;background:#d4d0c8;"></div>
<div style="left:504px;top:362px;width:39px;height:19px;background:#d4d0c8;"></div>
<div style="left:634px;top:362px;width:52px;height:19px;background:#d4d0c8;"></div>
<div style="left:23px;top:381px;width:848px;height:1px;background:#c0c0c0;"></div>
<div style="left:23px;top:362px;width:68px;height:19px;overflow:hidden;"><div class="t" style="left:2px;top:4px">geeu0002</div></div>
<div style="left:280px;top:362px;width:102px;height:19px;overflow:hidden;"><div class="t" style="left:1px;top:4px">1.1.2006</div></div>
<div style="left:383px;top:362px;width:64px;height:19px;overflow:hidden;"><div class="t" style="left:1px;top:4px">geeu</div></div>
<div style="left:448px;top:362px;width:55px;height:19px;overflow:hidden;"><div class="t" style="left:1px;top:4px">3</div></div>
<div style="left:504px;top:362px;width:39px;height:19px;overflow:hidden;"><div class="t" style="left:1px;top:4px">EUR</div></div>
<div style="left:544px;top:362px;width:89px;height:19px;overflow:hidden;"><div class="t" style="right:4px;top:4px">- 200,000 Eur</div></div>
<div style="left:634px;top:362px;width:52px;height:19px;overflow:hidden;"><div class="t" style="left:2px;top:4px">Admin</div></div>
<div style="left:740px;top:362px;width:53px;height:19px;overflow:hidden;"><div class="t" style="left:1px;top:4px">(memo)</div></div>
<div style="left:794px;top:362px;width:76px;height:19px;overflow:hidden;"><div class="t" style="right:3px;top:4px;letter-spacing:0.15px">(PRÁVA)</div></div>
<div style="left:11px;top:382px;width:12px;height:20px;background:#efebe7;border-right:1px solid #000;border-bottom:1px solid #000;border-left:1px solid #fff;border-top:1px solid #fff;"></div>
<div style="left:448px;top:382px;width:55px;height:19px;background:#d4d0c8;"></div>
<div style="left:504px;top:382px;width:39px;height:19px;background:#d4d0c8;"></div>
<div style="left:634px;top:382px;width:52px;height:19px;background:#d4d0c8;"></div>
<div style="left:23px;top:401px;width:848px;height:1px;background:#c0c0c0;"></div>
<div style="left:23px;top:382px;width:68px;height:19px;overflow:hidden;"><div class="t" style="left:2px;top:4px">geeu0003</div></div>
<div style="left:280px;top:382px;width:102px;height:19px;overflow:hidden;"><div class="t" style="left:1px;top:4px">18.12.2006</div></div>
<div style="left:383px;top:382px;width:64px;height:19px;overflow:hidden;"><div class="t" style="left:1px;top:4px">geeu</div></div>
<div style="left:448px;top:382px;width:55px;height:19px;overflow:hidden;"><div class="t" style="left:1px;top:4px">3</div></div>
<div style="left:504px;top:382px;width:39px;height:19px;overflow:hidden;"><div class="t" style="left:1px;top:4px">EUR</div></div>
<div style="left:544px;top:382px;width:89px;height:19px;overflow:hidden;"><div class="t" style="right:4px;top:4px">- 50,000 Eur</div></div>
<div style="left:634px;top:382px;width:52px;height:19px;overflow:hidden;"><div class="t" style="left:2px;top:4px">Admin</div></div>
<div style="left:740px;top:382px;width:53px;height:19px;overflow:hidden;"><div class="t" style="left:1px;top:4px">(memo)</div></div>
<div style="left:794px;top:382px;width:76px;height:19px;overflow:hidden;"><div class="t" style="right:3px;top:4px;letter-spacing:0.15px">(PRÁVA)</div></div>
<div style="left:11px;top:402px;width:12px;height:20px;background:#efebe7;border-right:1px solid #000;border-bottom:1px solid #000;border-left:1px solid #fff;border-top:1px solid #fff;"></div>
<div style="left:448px;top:402px;width:55px;height:19px;background:#d4d0c8;"></div>
<div style="left:504px;top:402px;width:39px;height:19px;background:#d4d0c8;"></div>
<div style="left:634px;top:402px;width:52px;height:19px;background:#d4d0c8;"></div>
<div style="left:23px;top:421px;width:848px;height:1px;background:#c0c0c0;"></div>
<div style="left:23px;top:402px;width:68px;height:19px;overflow:hidden;"><div class="t" style="left:2px;top:4px">geeu0004</div></div>
<div style="left:280px;top:402px;width:102px;height:19px;overflow:hidden;"><div class="t" style="left:1px;top:4px">20.1.2006 12:13:37</div></div>
<div style="left:383px;top:402px;width:64px;height:19px;overflow:hidden;"><div class="t" style="left:1px;top:4px">geeu</div></div>
<div style="left:448px;top:402px;width:55px;height:19px;overflow:hidden;"><div class="t" style="left:1px;top:4px">3</div></div>
<div style="left:504px;top:402px;width:39px;height:19px;overflow:hidden;"><div class="t" style="left:1px;top:4px">EUR</div></div>
<div style="left:544px;top:402px;width:89px;height:19px;overflow:hidden;"><div class="t" style="right:4px;top:4px">- 50,000 Eur</div></div>
<div style="left:634px;top:402px;width:52px;height:19px;overflow:hidden;"><div class="t" style="left:2px;top:4px">Admin</div></div>
<div style="left:740px;top:402px;width:53px;height:19px;overflow:hidden;"><div class="t" style="left:1px;top:4px">(memo)</div></div>
<div style="left:794px;top:402px;width:76px;height:19px;overflow:hidden;"><div class="t" style="right:3px;top:4px;letter-spacing:0.15px">(PRÁVA)</div></div>
<div style="left:11px;top:422px;width:12px;height:20px;background:#efebe7;border-right:1px solid #000;border-bottom:1px solid #000;border-left:1px solid #fff;border-top:1px solid #fff;"></div>
<div style="left:448px;top:422px;width:55px;height:19px;background:#d4d0c8;"></div>
<div style="left:504px;top:422px;width:39px;height:19px;background:#d4d0c8;"></div>
<div style="left:634px;top:422px;width:52px;height:19px;background:#d4d0c8;"></div>
<div style="left:23px;top:441px;width:848px;height:1px;background:#c0c0c0;"></div>
<div style="left:23px;top:422px;width:68px;height:19px;overflow:hidden;"><div class="t" style="left:2px;top:4px">KR01001</div></div>
<div style="left:280px;top:422px;width:102px;height:19px;overflow:hidden;"><div class="t" style="left:1px;top:4px">17.1.2006 10:22:00</div></div>
<div style="left:383px;top:422px;width:64px;height:19px;overflow:hidden;"><div class="t" style="left:1px;top:4px">kurz</div></div>
<div style="left:544px;top:422px;width:89px;height:19px;overflow:hidden;"><div class="t" style="right:4px;top:4px">-119,00 Kč</div></div>
<div style="left:634px;top:422px;width:52px;height:19px;overflow:hidden;"><div class="t" style="left:2px;top:4px">Admin</div></div>
<div style="left:740px;top:422px;width:53px;height:19px;overflow:hidden;"><div class="t" style="left:1px;top:4px">(memo)</div></div>
<div style="left:794px;top:422px;width:76px;height:19px;overflow:hidden;"><div class="t" style="right:3px;top:4px;letter-spacing:0.15px">(PRÁVA)</div></div>
<div style="left:11px;top:442px;width:12px;height:20px;background:#efebe7;border-right:1px solid #000;border-bottom:1px solid #000;border-left:1px solid #fff;border-top:1px solid #fff;"></div>
<div style="left:448px;top:442px;width:55px;height:19px;background:#d4d0c8;"></div>
<div style="left:504px;top:442px;width:39px;height:19px;background:#d4d0c8;"></div>
<div style="left:634px;top:442px;width:52px;height:19px;background:#d4d0c8;"></div>
<div style="left:23px;top:461px;width:848px;height:1px;background:#c0c0c0;"></div>
<div style="left:23px;top:442px;width:68px;height:19px;overflow:hidden;"><div class="t" style="left:2px;top:4px">KR01002</div></div>
<div style="left:280px;top:442px;width:102px;height:19px;overflow:hidden;"><div class="t" style="left:1px;top:4px">18.1.2006</div></div>
<div style="left:383px;top:442px;width:64px;height:19px;overflow:hidden;"><div class="t" style="left:1px;top:4px">kurz</div></div>
<div style="left:544px;top:442px;width:89px;height:19px;overflow:hidden;"><div class="t" style="right:4px;top:4px">200,00 Kč</div></div>
<div style="left:634px;top:442px;width:52px;height:19px;overflow:hidden;"><div class="t" style="left:2px;top:4px">Admin</div></div>
<div style="left:740px;top:442px;width:53px;height:19px;overflow:hidden;"><div class="t" style="left:1px;top:4px">(memo)</div></div>
<div style="left:794px;top:442px;width:76px;height:19px;overflow:hidden;"><div class="t" style="right:3px;top:4px;letter-spacing:0.15px">(PRÁVA)</div></div>
<div style="left:11px;top:462px;width:12px;height:20px;background:#efebe7;border-right:1px solid #000;border-bottom:1px solid #000;border-left:1px solid #fff;border-top:1px solid #fff;"></div>
<div style="left:448px;top:462px;width:55px;height:19px;background:#d4d0c8;"></div>
<div style="left:504px;top:462px;width:39px;height:19px;background:#d4d0c8;"></div>
<div style="left:634px;top:462px;width:52px;height:19px;background:#d4d0c8;"></div>
<div style="left:23px;top:481px;width:848px;height:1px;background:#c0c0c0;"></div>
<div style="left:23px;top:462px;width:68px;height:19px;overflow:hidden;"><div class="t" style="left:2px;top:4px">KR01003</div></div>
<div style="left:280px;top:462px;width:102px;height:19px;overflow:hidden;"><div class="t" style="left:1px;top:4px">20.1.2006</div></div>
<div style="left:383px;top:462px;width:64px;height:19px;overflow:hidden;"><div class="t" style="left:1px;top:4px">kurz</div></div>
<div style="left:544px;top:462px;width:89px;height:19px;overflow:hidden;"><div class="t" style="right:4px;top:4px">-300,00 Kč</div></div>
<div style="left:634px;top:462px;width:52px;height:19px;overflow:hidden;"><div class="t" style="left:2px;top:4px">Admin</div></div>
<div style="left:740px;top:462px;width:53px;height:19px;overflow:hidden;"><div class="t" style="left:1px;top:4px">(memo)</div></div>
<div style="left:794px;top:462px;width:76px;height:19px;overflow:hidden;"><div class="t" style="right:3px;top:4px;letter-spacing:0.15px">(PRÁVA)</div></div>
<div style="left:11px;top:482px;width:12px;height:20px;background:#efebe7;border-right:1px solid #000;border-bottom:1px solid #000;border-left:1px solid #fff;border-top:1px solid #fff;"></div>
<div style="left:448px;top:482px;width:55px;height:19px;background:#d4d0c8;"></div>
<div style="left:504px;top:482px;width:39px;height:19px;background:#d4d0c8;"></div>
<div style="left:634px;top:482px;width:52px;height:19px;background:#d4d0c8;"></div>
<div style="left:23px;top:501px;width:848px;height:1px;background:#c0c0c0;"></div>
<div style="left:23px;top:482px;width:68px;height:19px;overflow:hidden;"><div class="t" style="left:2px;top:4px">KR01004</div></div>
<div style="left:280px;top:482px;width:102px;height:19px;overflow:hidden;"><div class="t" style="left:1px;top:4px">20.1.2006</div></div>
<div style="left:383px;top:482px;width:64px;height:19px;overflow:hidden;"><div class="t" style="left:1px;top:4px">kurz</div></div>
<div style="left:544px;top:482px;width:89px;height:19px;overflow:hidden;"><div class="t" style="right:4px;top:4px">50,00 Kč</div></div>
<div style="left:634px;top:482px;width:52px;height:19px;overflow:hidden;"><div class="t" style="left:2px;top:4px">Admin</div></div>
<div style="left:740px;top:482px;width:53px;height:19px;overflow:hidden;"><div class="t" style="left:1px;top:4px">(memo)</div></div>
<div style="left:794px;top:482px;width:76px;height:19px;overflow:hidden;"><div class="t" style="right:3px;top:4px;letter-spacing:0.15px">(PRÁVA)</div></div>
<div style="left:11px;top:502px;width:12px;height:20px;background:#efebe7;border-right:1px solid #000;border-bottom:1px solid #000;border-left:1px solid #fff;border-top:1px solid #fff;"></div>
<div style="left:23px;top:502px;width:847px;height:19px;background:#ffff00;"></div>
<div style="left:23px;top:521px;width:848px;height:1px;background:#c0c0c0;"></div>
<div style="left:23px;top:502px;width:68px;height:19px;overflow:hidden;"><div class="t" style="left:2px;top:4px">p010000</div></div>
<div style="left:92px;top:502px;width:187px;height:19px;overflow:hidden;"><div class="t" style="left:1px;top:4px">*počáteční stav</div></div>
<div style="left:280px;top:502px;width:102px;height:19px;overflow:hidden;"><div class="t" style="left:1px;top:4px">1.1.2002 14:00:22</div></div>
<div style="left:383px;top:502px;width:64px;height:19px;overflow:hidden;"><div class="t" style="left:1px;top:4px">p-p</div></div>
<div style="left:448px;top:502px;width:55px;height:19px;overflow:hidden;"><div class="t" style="left:1px;top:4px">P</div></div>
<div style="left:544px;top:502px;width:89px;height:19px;overflow:hidden;"><div class="t" style="right:4px;top:4px">15 524,00 Kč</div></div>
<div style="left:634px;top:502px;width:52px;height:19px;overflow:hidden;"><div class="t" style="left:2px;top:4px">Darina</div></div>
<div style="left:740px;top:502px;width:53px;height:19px;overflow:hidden;"><div class="t" style="left:1px;top:4px">(memo)</div></div>
<div style="left:794px;top:502px;width:76px;height:19px;overflow:hidden;"><div class="t" style="right:3px;top:4px;letter-spacing:0.15px">(PRÁVA)</div></div>
<div style="left:11px;top:522px;width:12px;height:20px;background:#efebe7;border-right:1px solid #000;border-bottom:1px solid #000;border-left:1px solid #fff;border-top:1px solid #fff;"></div>
<div style="left:448px;top:522px;width:55px;height:19px;background:#d4d0c8;"></div>
<div style="left:504px;top:522px;width:39px;height:19px;background:#d4d0c8;"></div>
<div style="left:634px;top:522px;width:52px;height:19px;background:#d4d0c8;"></div>
<div style="left:23px;top:541px;width:848px;height:1px;background:#c0c0c0;"></div>
<div style="left:23px;top:522px;width:68px;height:19px;overflow:hidden;"><div class="t" style="left:2px;top:4px">p010001</div></div>
<div style="left:92px;top:522px;width:187px;height:19px;overflow:hidden;"><div class="t" style="left:1px;top:4px">tisk</div></div>
<div style="left:280px;top:522px;width:102px;height:19px;overflow:hidden;"><div class="t" style="left:1px;top:4px">19.3.2002 14:18:14</div></div>
<div style="left:383px;top:522px;width:64px;height:19px;overflow:hidden;"><div class="t" style="left:1px;top:4px">p-p</div></div>
<div style="left:448px;top:522px;width:55px;height:19px;overflow:hidden;"><div class="t" style="left:1px;top:4px">P</div></div>
<div style="left:544px;top:522px;width:89px;height:19px;overflow:hidden;"><div class="t" style="right:4px;top:4px">15,80 Kč</div></div>
<div style="left:634px;top:522px;width:52px;height:19px;overflow:hidden;"><div class="t" style="left:2px;top:4px">Darina</div></div>
<div style="left:740px;top:522px;width:53px;height:19px;overflow:hidden;"><div class="t" style="left:1px;top:4px">(memo)</div></div>
<div style="left:794px;top:522px;width:76px;height:19px;overflow:hidden;"><div class="t" style="right:3px;top:4px;letter-spacing:0.15px">(PRÁVA)</div></div>
<div style="left:91px;top:142px;width:1px;height:400px;background:#c0c0c0;"></div>
<div style="left:279px;top:142px;width:1px;height:400px;background:#c0c0c0;"></div>
<div style="left:382px;top:142px;width:1px;height:400px;background:#c0c0c0;"></div>
<div style="left:447px;top:142px;width:1px;height:400px;background:#c0c0c0;"></div>
<div style="left:503px;top:142px;width:1px;height:400px;background:#c0c0c0;"></div>
<div style="left:543px;top:142px;width:1px;height:400px;background:#c0c0c0;"></div>
<div style="left:633px;top:142px;width:1px;height:400px;background:#c0c0c0;"></div>
<div style="left:686px;top:142px;width:1px;height:400px;background:#c0c0c0;"></div>
<div style="left:739px;top:142px;width:1px;height:400px;background:#c0c0c0;"></div>
<div style="left:793px;top:142px;width:1px;height:400px;background:#c0c0c0;"></div>
<div style="left:870px;top:142px;width:1px;height:400px;background:#c0c0c0;"></div>
<svg style="left:14px;top:286px" width="6" height="11" viewBox="0 0 6 11"><path d="M0 0L6 5.500L0 11Z" fill="#000"/></svg>
<div style="left:934px;top:122px;width:1px;height:434px;background:#8a8682;"></div>
<div style="left:935px;top:122px;width:19px;height:434px;background:#e4e0dc;"></div>
<div style="left:936px;top:139px;width:16px;height:399px;background:#a19d99;"></div>
<div style="left:936px;top:122px;width:16px;height:17px;background:#efebe7;"></div>
<svg style="left:936px;top:122px" width="16" height="17" viewBox="0 0 16 17"><path d="M8 2L15 16" stroke="#77736f" stroke-width="1.200"/></svg>
<div style="left:936px;top:538px;width:16px;height:17px;background:#efebe7;"></div>
<svg style="left:936px;top:538px" width="16" height="17" viewBox="0 0 16 17"><path d="M15.500 1.500C13 5 10 10 9 15.500" stroke="#5f5b57" stroke-width="1.500" fill="none"/></svg>
<div style="left:936px;top:240px;width:16px;height:12px;background:#efebe7;border-right:1px solid #6e6a66;border-bottom:1px solid #6e6a66;border-top:1px solid #fff;border-left:1px solid #fff;"></div>
<div class="t" style="left:9px;top:564px;">Č. dokl. uhr.</div>
<div class="t" style="left:84px;top:564px;">Popis</div>
<div class="t" style="left:284px;top:564px;">Datum</div>
<div class="t" style="left:409px;top:564px;">Druh úhrady</div>
<div class="t" style="left:509px;top:564px;">Bank. účet</div>
<div style="left:10px;top:578px;width:72px;height:20px;border-top:2px solid #6b6865;border-left:2px solid #6b6865;background:#fff;overflow:hidden;"></div>
<div style="left:12px;top:580px;width:70px;height:18px;overflow:hidden;"><div class="t" style="left:1px;top:3px">ge0001</div></div>
<div style="left:85px;top:578px;width:197px;height:20px;border-top:2px solid #6b6865;border-left:2px solid #6b6865;background:#fff;overflow:hidden;"></div>
<div style="left:285px;top:578px;width:121px;height:20px;border-top:2px solid #6b6865;border-left:2px solid #6b6865;background:#fff;overflow:hidden;"></div>
<div style="left:287px;top:580px;width:98px;height:18px;overflow:hidden;"><div class="t" style="left:1px;top:3px">19.3.2002 13:53:45</div></div>
<div style="left:385px;top:579px;width:21px;height:19px;background:#efebe7;border-right:1px solid #000;border-bottom:1px solid #000;border-top:1px solid #fff;border-left:1px solid #fff;"></div>
<div style="left:391px;top:589px;width:2px;height:2px;background:#000;"></div>
<div style="left:395px;top:589px;width:2px;height:2px;background:#000;"></div>
<div style="left:399px;top:589px;width:2px;height:2px;background:#000;"></div>
<div style="left:410px;top:578px;width:96px;height:20px;border-top:2px solid #6b6865;border-left:2px solid #6b6865;background:#fff;overflow:hidden;"></div>
<div style="left:412px;top:580px;width:73px;height:18px;overflow:hidden;"><div class="t" style="left:1px;top:3px">ge</div></div>
<div style="left:485px;top:579px;width:21px;height:19px;background:#efebe7;border-right:1px solid #000;border-bottom:1px solid #000;border-top:1px solid #fff;border-left:1px solid #fff;"></div>
<div style="left:491px;top:589px;width:2px;height:2px;background:#000;"></div>
<div style="left:495px;top:589px;width:2px;height:2px;background:#000;"></div>
<div style="left:499px;top:589px;width:2px;height:2px;background:#000;"></div>
<div style="left:510px;top:578px;width:72px;height:20px;border-top:2px solid #6b6865;border-left:2px solid #6b6865;background:#d4d0c8;overflow:hidden;"></div>
<div style="left:512px;top:580px;width:70px;height:18px;overflow:hidden;"><div class="t" style="left:1px;top:3px">1</div></div>
<div class="t" style="left:9px;top:604px;">Měna</div>
<div class="t" style="left:59px;top:604px;">Celkem</div>
<div class="t" style="left:134px;top:604px;">Vyřídil</div>
<div class="t" style="left:209px;top:604px;">Partner</div>
<div class="t" style="left:284px;top:604px;">Práva</div>
<div style="left:10px;top:618px;width:47px;height:20px;border-top:2px solid #6b6865;border-left:2px solid #6b6865;background:#d4d0c8;overflow:hidden;"></div>
<div style="left:60px;top:618px;width:72px;height:20px;border-top:2px solid #6b6865;border-left:2px solid #6b6865;background:#fff;overflow:hidden;"></div>
<div style="left:62px;top:620px;width:70px;height:18px;overflow:hidden;"><div class="t" style="left:1px;top:3px">309 160,92 Kč</div></div>
<div style="left:135px;top:618px;width:71px;height:20px;border-top:2px solid #6b6865;border-left:2px solid #6b6865;background:#d4d0c8;overflow:hidden;"></div>
<div style="left:137px;top:620px;width:48px;height:18px;overflow:hidden;"><div class="t" style="left:1px;top:3px">Darina</div></div>
<div style="left:185px;top:619px;width:21px;height:19px;background:#efebe7;border-right:1px solid #000;border-bottom:1px solid #000;border-top:1px solid #fff;border-left:1px solid #fff;"></div>
<div style="left:191px;top:629px;width:2px;height:2px;background:#000;"></div>
<div style="left:195px;top:629px;width:2px;height:2px;background:#000;"></div>
<div style="left:199px;top:629px;width:2px;height:2px;background:#000;"></div>
<div style="left:210px;top:618px;width:71px;height:20px;border-top:2px solid #6b6865;border-left:2px solid #6b6865;background:#fff;overflow:hidden;"></div>
<div style="left:260px;top:619px;width:21px;height:19px;background:#efebe7;border-right:1px solid #000;border-bottom:1px solid #000;border-top:1px solid #fff;border-left:1px solid #fff;"></div>
<div style="left:266px;top:629px;width:2px;height:2px;background:#000;"></div>
<div style="left:270px;top:629px;width:2px;height:2px;background:#000;"></div>
<div style="left:274px;top:629px;width:2px;height:2px;background:#000;"></div>
<div style="left:285px;top:618px;width:96px;height:20px;border-top:2px solid #6b6865;border-left:2px solid #6b6865;background:#fff;overflow:hidden;"></div>
<div style="left:287px;top:620px;width:73px;height:18px;overflow:hidden;"><div class="t" style="right:3px;top:3px">(PRÁVA)</div></div>
<div style="left:360px;top:619px;width:21px;height:19px;background:#efebe7;border-right:1px solid #000;border-bottom:1px solid #000;border-top:1px solid #fff;border-left:1px solid #fff;"></div>
<div style="left:366px;top:629px;width:2px;height:2px;background:#000;"></div>
<div style="left:370px;top:629px;width:2px;height:2px;background:#000;"></div>
<div style="left:374px;top:629px;width:2px;height:2px;background:#000;"></div>
<div style="left:624px;top:624px;width:12px;height:12px;background:#a29e9a;border:1px solid #7d7975;"></div>
<div style="left:639px;top:561px;width:317px;height:76px;background:#fff;border-left:3px solid #000;border-top:0;"></div>
<div style="left:642px;top:561px;width:314px;height:2px;background:#000;border-top:1px solid #77736f;"></div>
<div style="left:642px;top:562px;width:2px;height:75px;background:#000;border-left:1px solid #77736f;"></div>
<div style="left:5px;top:664px;width:955px;height:1px;background:#000;"></div>
<div style="left:5px;top:667px;width:60px;height:17px;border-top:1px solid #8f8b87;border-left:1px solid #8f8b87;"></div>
<div style="left:67px;top:667px;width:892px;height:17px;border-top:1px solid #8f8b87;border-left:1px solid #8f8b87;"></div>
<div class="t" style="left:6px;top:671px;">0/32</div>
<div class="t" style="left:68px;top:671px;letter-spacing:-0.081px;">Druh úhrady [faktury_uhrhl.IDUDruh]</div>
<svg style="left:944px;top:670px" width="14" height="14" viewBox="0 0 14 14"><path d="M13 2L2 13M13 6L6 13M13 10L10 13" stroke="#8f8b87" stroke-width="1.200"/></svg>
<div style="left:508px;top:96px;width:157px;height:80px;background:#efebe7;border-right:2px solid #8f8b87;border-bottom:3px solid #8f8b87;"></div>
<div style="left:508px;top:122px;width:155px;height:1px;background:#8f8b87;"></div>
<div style="left:508px;top:123px;width:155px;height:1px;background:#fff;"></div>
<div class="t" style="left:536px;top:104px;letter-spacing:-0.074px;"><u>P</u>řepočítat označené</div>
<div class="t" style="left:536px;top:131px;letter-spacing:-0.133px;"><u>Z</u>aúčtuj do deníku</div>
<div class="t" style="left:536px;top:156px;letter-spacing:-0.307px;"><u>H</u>omebanking</div>
<svg style="left:515px;top:102px" width="15" height="16" viewBox="0 0 15 16"><defs><linearGradient id="gSig" x1="0" y1="0" x2="0" y2="1"><stop offset="0" stop-color="#e00000"/><stop offset="0.55" stop-color="#f08000"/><stop offset="1" stop-color="#ffe000"/></linearGradient></defs><path d="M1 1.500H12.500V5.200H11.200L10.600 3.800H5L8.600 8L4.600 12.600H10.800L11.400 10.800H12.800V15H1V13.600L5.800 8L1 2.800Z" fill="url(#gSig)" stroke="#000" stroke-width="0.800" stroke-linejoin="round"/></svg>
<div style="left:515px;top:130px;width:17px;height:14px;background:#e8e8e8;border:1px solid #555;"></div>
<div style="left:516px;top:138px;width:15px;height:1px;background:#000;"></div>
<div style="left:516px;top:140px;width:15px;height:1px;background:#555;"></div>
<div style="left:516px;top:142px;width:15px;height:1px;background:#555;"></div>
<div style="left:523px;top:131px;width:1px;height:12px;background:#555;"></div>
<div class="t" style="left:516px;top:129px;font-size:8px;font-weight:bold;color:#e00000;line-height:10px;height:10px">M</div>
<div class="t" style="left:525px;top:129px;font-size:8px;font-weight:bold;color:#0020e0;line-height:10px;height:10px">D</div>
<div style="left:516px;top:154px;width:13px;height:15px;background:linear-gradient(#f6f2ec 45%,#dccbb2);border:1px solid #444;"></div>
<div class="t" style="left:517px;top:153px;font-size:9px;font-weight:bold;line-height:10px;height:10px">€</div>
<svg style="left:516px;top:151px" width="16" height="16" viewBox="0 0 16 16"><path d="M13.500 2.500L6 11.500" stroke="#b85808" stroke-width="3.600" stroke-linecap="round"/><path d="M13.500 2.500L6.500 11" stroke="#f89030" stroke-width="2.200" stroke-linecap="round"/><path d="M4 14L5 10.500L7.500 12.500Z" fill="#e8c890" stroke="#6a4a20" stroke-width="0.500"/></svg>
<svg style="left:644px;top:155px" width="12" height="12" viewBox="0 0 12 12"><path d="M1.500 11V1.500L10.500 5.500L1.500 5" stroke="#8f8b87" stroke-width="1.300" fill="none"/></svg>
<div style="left:656px;top:151px;width:86px;height:103px;background:#efebe7;border-right:2px solid #8f8b87;border-bottom:3px solid #8f8b87;"></div>
<div style="left:656px;top:151px;width:85px;height:27px;background:#efebe7;border-bottom:2px solid #8f8b87;border-right:3px solid #8f8b87;"></div>
<svg style="left:666px;top:161px" width="10" height="10" viewBox="0 0 12 12"><circle cx="6" cy="6" r="6" fill="url(#gDot)"/></svg>
<div class="t" style="left:684px;top:160px;letter-spacing:-0.045px;"><u>A</u>BO</div>
<svg style="left:666px;top:186px" width="10" height="10" viewBox="0 0 12 12"><circle cx="6" cy="6" r="6" fill="url(#gDot)"/></svg>
<div class="t" style="left:684px;top:185px;letter-spacing:-0.442px;"><u>C</u>SV</div>
<svg style="left:666px;top:211px" width="10" height="10" viewBox="0 0 12 12"><circle cx="6" cy="6" r="6" fill="url(#gDot)"/></svg>
<div class="t" style="left:684px;top:210px;letter-spacing:-0.567px;">C<u>I</u>TIBANK</div>
<svg style="left:666px;top:236px" width="10" height="10" viewBox="0 0 12 12"><circle cx="6" cy="6" r="6" fill="url(#gDot)"/></svg>
<div class="t" style="left:684px;top:235px;letter-spacing:-0.189px;"><u>ŽB</u> CSV</div>
<div style="left:965px;top:1px;width:313px;height:689px;background:#3c3a38;border-radius:5px 7px 0 0;"></div>
<div style="left:966px;top:2px;width:311px;height:687px;background:#efebe7;border-radius:4px 6px 0 0;"></div>
<div style="left:966px;top:2px;width:311px;height:19px;background:linear-gradient(#ffffff 0%,#f5f3f0 40%,#ece8e4 100%);border-radius:4px 6px 0 0;"></div>
<div style="left:966px;top:21px;width:1px;height:668px;background:#fbfaf9;"></div>
<div style="left:971px;top:6px;width:14px;height:11px;background:linear-gradient(90deg,#e4e4e4,#fafafa);border:1px solid #6a6a70;border-top:2px solid #3a5a8a;"></div>
<div class="t" style="left:1052px;top:4px;letter-spacing:-0.132px;color:#3c3c3c;">Tisk: Doklady úhrad</div>
<div style="left:1209px;top:4px;width:20px;height:14px;border:1px solid #8a8682;border-radius:3px;background:linear-gradient(#fbfaf9,#e4e0dc);"></div>
<div style="left:1215px;top:12px;width:8px;height:2px;background:#2e2e2e;"></div>
<div style="left:1231px;top:4px;width:20px;height:14px;border:1px solid #8a8682;border-radius:3px;background:linear-gradient(#fbfaf9,#e4e0dc);"></div>
<div style="left:1237px;top:6px;width:9px;height:9px;border:1px solid #2e2e2e;border-top-width:2px;"></div>
<div style="left:1253px;top:4px;width:20px;height:14px;border:1px solid #8a8682;border-radius:3px;background:linear-gradient(#fbfaf9,#e4e0dc);"></div>
<svg style="left:1259px;top:7px" width="8" height="8" viewBox="0 0 8 8"><path d="M0.800 0.800L7.200 7.200M7.200 0.800L0.800 7.200" stroke="#2e2e2e" stroke-width="2" fill="none"/></svg>
<div class="btn" style="left:979px;top:23px;width:25px;height:24px;"></div>
<svg style="left:979px;top:23px" width="24" height="23" viewBox="0 0 24 23"><path d="M4.500 5.500h8l3 3v10.500h-11z" fill="url(#gPaper)" stroke="#555" stroke-width="1"/><path d="M6 14h7M6 16h7" stroke="#c8a888" stroke-width="1"/><path d="M14 13.500L20 19.500" stroke="#4a4a4a" stroke-width="3" stroke-linecap="round"/><circle cx="10.500" cy="9" r="5.200" fill="url(#gLens)" stroke="#6a8a9a" stroke-width="1.4"/></svg>
<div class="btn" style="left:1004px;top:23px;width:25px;height:24px;"></div>
<svg style="left:1004px;top:23px" width="24" height="23" viewBox="0 0 24 23"><path d="M8 11L11.500 3.500L19.500 6L16.500 13Z" fill="url(#gPaper)" stroke="#666" stroke-width="0.8"/><path d="M3.500 12L8 9L20 12.500L16 16.500Z" fill="#d9d9d9" stroke="#444" stroke-width="0.8"/><path d="M3.500 12L16 16.500V20.500L3.500 16Z" fill="url(#gPrn)" stroke="#333" stroke-width="0.8"/><path d="M16 16.500L20 12.500V16.500L16 20.500Z" fill="#555" stroke="#333" stroke-width="0.8"/><rect x="12.500" y="17" width="1.500" height="1.500" fill="#20e020"/></svg>
<div class="btn" style="left:1037px;top:23px;width:25px;height:24px;"></div>
<svg style="left:1037px;top:23px" width="24" height="23" viewBox="0 0 24 23"><path d="M9.4 5.5a1.2 1.2 0 0 1 1.2 -1.2h1.8000000000000003a1.2 1.2 0 0 1 1.2 1.2V9.4H17.5a1.2 1.2 0 0 1 1.2 1.2v1.8000000000000003a1.2 1.2 0 0 1 -1.2 1.2H13.6V17.5a1.2 1.2 0 0 1 -1.2 1.2h-1.8000000000000003a1.2 1.2 0 0 1 -1.2 -1.2V13.6H5.5a1.2 1.2 0 0 1 -1.2 -1.2v-1.8000000000000003a1.2 1.2 0 0 1 1.2 -1.2H9.4Z" fill="url(#gPlus)" stroke="#2a6a92" stroke-width="1"/><path d="M11.5 5.8V16.7M5.8 11.0H17.2" stroke="#c4e6f4" stroke-width="1.200" opacity="0.700" fill="none"/></svg>
<div class="btn" style="left:1062px;top:23px;width:25px;height:24px;"></div>
<svg style="left:1062px;top:23px" width="24" height="23" viewBox="0 0 24 23"><rect x="5.5" y="9.8" width="13.5" height="4.2" rx="2" fill="#8a8a8a" stroke="#7a7a7a" stroke-width="0.8"/></svg>
<div class="btn" style="left:1087px;top:23px;width:25px;height:24px;"></div>
<svg style="left:1087px;top:23px" width="24" height="23" viewBox="0 0 24 23"><rect x="5" y="5.500" width="13" height="14" rx="1" fill="#8e8e8e" stroke="#555" stroke-width="1"/><path d="M8.5 6.500a3 3 0 0 1 6 0z" fill="#b5562a" stroke="#6a2a10" stroke-width="0.8"/><path d="M11.500 9.500h5l2.500 2.500v7.500h-7.500z" fill="url(#gPaper)" stroke="#555" stroke-width="1"/></svg>
<div class="btn" style="left:1112px;top:23px;width:25px;height:24px;"></div>
<svg style="left:1112px;top:23px" width="24" height="23" viewBox="0 0 24 23"><path d="M17.500 3L20.500 5.500L16 11.500L17.500 15L13 19.500L9.500 17.500L4 13L9.500 10.500L13 9Z" fill="#808080"/></svg>
<div class="btn" style="left:1168px;top:23px;width:25px;height:24px;"></div>
<svg style="left:1168px;top:23px" width="24" height="23" viewBox="0 0 24 23"><path d="M5 6.500L7.500 4L12 8.500L16.500 4L19.500 6.500L15 11.500L19.500 16.500L16.500 19.500L12 14.500L7.500 19.500L4.500 16.500L9 11.500Z" fill="url(#gRed)" stroke="#a01010" stroke-width="0.9" stroke-linejoin="round"/></svg>
<div class="btn" style="left:1193px;top:23px;width:25px;height:24px;"></div>
<svg style="left:1193px;top:23px" width="24" height="23" viewBox="0 0 24 23"><path d="M8 9C8 4 16.500 4 16.500 8.800C16.500 11.500 13 12 13 15" stroke="#0c2c80" stroke-width="3.800" fill="none"/><path d="M8 9C8 4 16.500 4 16.500 8.800C16.500 11.500 13 12 13 15" stroke="url(#gBlueQ)" stroke-width="2.300" fill="none"/><circle cx="12.800" cy="18.800" r="1.700" fill="#2a60c0" stroke="#0c2c80" stroke-width="0.800"/></svg>
<div style="left:971px;top:48px;width:301px;height:1px;background:#a5a19d;"></div>
<div style="left:971px;top:49px;width:301px;height:1px;background:#fff;"></div>
<div class="t" style="left:973px;top:64px;letter-spacing:-0.584px;">Cíl</div>
<div style="left:999px;top:60px;width:24px;height:25px;border-top:2px solid #a8a4a0;border-left:2px solid #a8a4a0;background:#efebe7;"></div>
<svg style="left:1000px;top:61px" width="24" height="23" viewBox="0 0 24 23"><path d="M8 11L11.500 3.500L19.500 6L16.500 13Z" fill="url(#gPaper)" stroke="#666" stroke-width="0.8"/><path d="M3.500 12L8 9L20 12.500L16 16.500Z" fill="#d9d9d9" stroke="#444" stroke-width="0.8"/><path d="M3.500 12L16 16.500V20.500L3.500 16Z" fill="url(#gPrn)" stroke="#333" stroke-width="0.8"/><path d="M16 16.500L20 12.500V16.500L16 20.500Z" fill="#555" stroke="#333" stroke-width="0.8"/><rect x="12.500" y="17" width="1.500" height="1.500" fill="#20e020"/></svg>
<div class="btn" style="left:1024px;top:60px;width:25px;height:25px;"></div>
<svg style="left:1024px;top:60px" width="24" height="24" viewBox="0 0 24 24"><path d="M5.500 6.500L8 4H11L12.500 5.500H19V19.500H6.500V11L5.500 10Z" fill="#808080"/><rect x="8" y="8" width="1.500" height="1.500" fill="#eee"/></svg>
<div class="btn" style="left:1049px;top:60px;width:25px;height:25px;"></div>
<svg style="left:1049px;top:60px" width="24" height="24" viewBox="0 0 24 24"><rect x="4.500" y="4.500" width="15" height="15" fill="#10a010" stroke="#0a5a0a" stroke-width="1"/><path d="M6 9L11 7.500L17 5.500" stroke="#fff" stroke-width="1.500" fill="none"/><path d="M7 9.500H17" stroke="#000" stroke-width="1"/><rect x="8.500" y="11.500" width="7" height="7" fill="none" stroke="#fff" stroke-width="1.300"/><path d="M12 11.500V18.500M8.500 15H15.500" stroke="#fff" stroke-width="1.300"/></svg>
<div class="t" style="left:973px;top:104px;letter-spacing:0.07px;">Tiskové sestavy</div>
<div class="t" style="left:1090px;top:100px;letter-spacing:-0.17px;">Stát</div>
<div class="sunk" style="left:1118px;top:94px;width:60px;height:20px;"></div>
<div style="left:1158px;top:96px;width:19px;height:18px;background:#efebe7;border-right:1px solid #000;border-bottom:1px solid #000;"></div>
<div style="left:1162px;top:105px;width:2px;height:2px;background:#000;"></div>
<div style="left:1166px;top:105px;width:2px;height:2px;background:#000;"></div>
<div style="left:1170px;top:105px;width:2px;height:2px;background:#000;"></div>
<div style="left:1182px;top:61px;width:87px;height:53px;border:1px solid #8f8b87;box-shadow:1px 1px 0 #fff, inset 1px 1px 0 #fff;"></div>
<div style="left:1189px;top:55px;width:60px;height:13px;background:#efebe7;"></div>
<div class="t" style="left:1192px;top:56px;letter-spacing:-0.178px;">Použít data</div>
<svg style="left:1190px;top:74px" width="12" height="10" viewBox="0 0 12 10"><path d="M0 5L6 0L12 5L6 10Z" fill="#a5a19d"/><path d="M0 5L6 0L12 5" stroke="#77736f" stroke-width="1.600" fill="none"/><path d="M1 6L6 10L11 6" stroke="#dcd8d4" stroke-width="1" fill="none"/></svg>
<svg style="left:1190px;top:96px" width="13" height="12" viewBox="0 0 13 12"><path d="M0.500 6L6.500 0.500L12.500 6L6.500 11.500Z" fill="#f3f1ef"/><path d="M0.800 6L6.500 11.200L12.200 6" stroke="#77736f" stroke-width="1.800" fill="none"/></svg>
<div class="t" style="left:1210px;top:75px;">označená</div>
<div class="t" style="left:1210px;top:96px;">všechna</div>
<div style="left:970px;top:122px;width:302px;height:449px;background:#fff;border-top:2px solid #000;border-left:2px solid #000;"></div>
<div style="left:972px;top:124px;width:300px;height:13px;background:#000;overflow:hidden;"><div class="t" style="left:0;top:3px;color:#fff;letter-spacing:-0.098px">Úhrady (příjmový/výdajový doklad)</div></div>
<div class="t" style="left:972px;top:141px;letter-spacing:-0.348px;">Pokladní kniha</div>
<div class="t" style="left:972px;top:155px;letter-spacing:-0.206px;">Pokladní kniha - podrobně</div>
<div class="t" style="left:972px;top:169px;letter-spacing:0.064px;">Zápočet</div>
<div class="t" style="left:972px;top:183px;letter-spacing:-0.06px;">Zápočet v cizí měně</div>
<div class="t" style="left:972px;top:197px;letter-spacing:-0.033px;">Univerzální tisková sestava</div>
<div style="left:970px;top:579px;width:302px;height:105px;border:1px solid #8f8b87;box-shadow:1px 1px 0 #fff, inset 1px 1px 0 #fff;"></div>
<div style="left:978px;top:573px;width:82px;height:13px;background:#efebe7;"></div>
<div class="t" style="left:980px;top:575px;letter-spacing:0.099px;">Úprava sestavy</div>
<div class="t" style="left:977px;top:594px;">Popis</div>
<div class="t" style="left:977px;top:622px;">Typ</div>
<div class="t" style="left:977px;top:650px;letter-spacing:-0.014px;">Soubor</div>
<div style="left:1014px;top:588px;width:249px;height:21px;border-top:2px solid #7f7b77;border-left:2px solid #7f7b77;background:#efebe7;"></div>
<div class="t g" style="left:1017px;top:595px;">Úhrady (příjmový/výdajový doklad)</div>
<div style="left:1014px;top:616px;width:249px;height:21px;border-top:2px solid #7f7b77;border-left:2px solid #7f7b77;background:#efebe7;"></div>
<div class="t g" style="left:1017px;top:623px;">1</div>
<div style="left:1014px;top:644px;width:249px;height:19px;border-top:2px solid #000;border-left:2px solid #000;background:#efebe7;"></div>
<div class="t g" style="left:1017px;top:650px;">faktury\dokladprijemuhrady.rep</div>
<div style="left:1243px;top:647px;width:20px;height:16px;background:#efebe7;border-right:2px solid #000;border-bottom:1px solid #000;"></div>
</body></html>
